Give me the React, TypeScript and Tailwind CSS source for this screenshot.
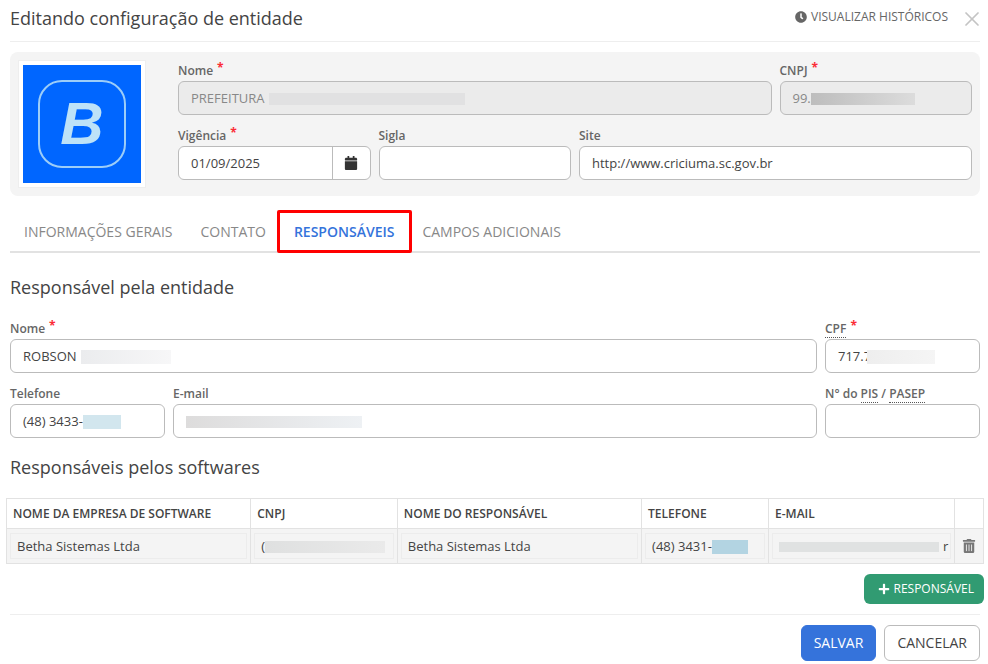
import type { ReactNode } from 'react';
import { FaCalendar, FaClock, FaPlus, FaTrashAlt } from 'react-icons/fa';
import { X } from 'lucide-react';

function Redacted({ className }: { className: string }) {
  return <span className={`block shrink-0 ${className}`} />;
}

function Label({ text, required, hint }: { text: ReactNode; required?: boolean; hint?: boolean }) {
  return (
    <div className="mb-px flex h-5 items-center pt-0.5 text-xs font-semibold text-[#666]">
      <span className={hint ? 'border-b border-dotted border-[#555]' : ''}>{text}</span>
      {required && <span className="mb-1.5 ml-1 text-xs font-bold leading-none text-red-500">*</span>}
    </div>
  );
}

function Box({ children, disabled }: { children?: ReactNode; disabled?: boolean }) {
  return (
    <div
      className={`flex h-8.5 items-center rounded-md border border-[#bbb] px-3 pt-0.5 text-[13px] ${
        disabled ? 'bg-[#ebebeb] text-[#888]' : 'bg-white text-[#444]'
      }`}
    >
      {children}
    </div>
  );
}

function Cell({ children }: { children: ReactNode }) {
  return (
    <td className="border border-[#e2e2e2] bg-[#f4f4f4] px-0.75 py-1">
      <div className="flex h-6.5 items-center overflow-hidden border border-[#ececec] px-1.5 pt-0.5 text-[13px] text-[#444]">
        {children}
      </div>
    </td>
  );
}

function Head({ children }: { children?: ReactNode }) {
  return <th className="h-7.5 border border-[#e2e2e2] px-1.5 text-left text-xs font-semibold text-[#444]">{children}</th>;
}

export default function App() {
  return (
    <div className="h-screen overflow-hidden bg-white pl-2.5 pr-2 font-['Open_Sans',sans-serif] text-[#444]">
      {/* Header */}
      <div className="flex items-center justify-between border-b border-[#eee] pb-2.25 pt-1">
        <h1 className="text-lg font-normal leading-7 text-[#444]">Editando configuração de entidade</h1>
        <div className="flex items-center gap-3">
          <span className="mb-0.5 flex items-center gap-1 text-xs text-[#666]">
            <FaClock className="h-3 w-3" />
            VISUALIZAR HISTÓRICOS
          </span>
          <X className="-mr-1 mt-px h-6 w-6 text-[#c4c4c4]" strokeWidth={1.75} />
        </div>
      </div>

      {/* Entity panel */}
      <div className="mt-2.5 flex gap-8 rounded-lg bg-[#f4f4f4] p-2">
        <div className="h-32 w-32 shrink-0 border border-[#eee] bg-white p-1">
          <div className="flex h-full w-full items-center justify-center bg-[#0066ff]">
            <div className="flex h-22 w-22 items-center justify-center rounded-3xl border-2 border-[#9ccdf8]">
              <span className="font-['Liberation_Sans',sans-serif] text-6xl font-bold italic text-[#bde2f8]">B</span>
            </div>
          </div>
        </div>
        <div className="grid flex-1 grid-cols-4 content-start gap-x-2 gap-y-2.5">
          <div className="col-span-3">
            <Label text="Nome" required />
            <Box disabled>
              PREFEITURA
              <Redacted className="ml-1 h-3 w-49 bg-[#e1e1e2]" />
            </Box>
          </div>
          <div>
            <Label text="CNPJ" required />
            <Box disabled>
              99.
              <Redacted className="h-3 w-26 bg-linear-to-r from-[#bdbdbd] to-[#dcdcdc]" />
            </Box>
          </div>
          <div>
            <Label text="Vigência" required />
            <div className="flex h-8.5 rounded-md border border-[#bbb] bg-white text-[13px]">
              <span className="flex flex-1 items-center px-3 pt-0.5">01/09/2025</span>
              <span className="flex w-9.5 items-center justify-center border-l border-[#bbb]">
                <FaCalendar className="h-3.5 w-3.5 text-[#333]" />
              </span>
            </div>
          </div>
          <div>
            <Label text="Sigla" />
            <Box />
          </div>
          <div className="col-span-2">
            <Label text="Site" />
            <Box>http://www.criciuma.sc.gov.br</Box>
          </div>
        </div>
      </div>

      {/* Tabs */}
      <div className="mt-3.5 flex border-b-2 border-[#e2e2e2] text-sm text-[#888]">
        <span className="px-3.5 pb-2.25 pt-3">INFORMAÇÕES GERAIS</span>
        <span className="px-3.5 pb-2.25 pt-3">CONTATO</span>
        <span className="relative -mb-0.5 border-b-2 border-[#3573db] px-3.5 pb-2.25 pt-3 font-semibold text-[#3573db]">
          RESPONSÁVEIS
          <span className="absolute -bottom-0.5 -left-[3px] -right-1 top-0 rounded-xs border-[3px] border-[#ff0000]" />
        </span>
        <span className="px-3.5 pb-2.25 pt-3">CAMPOS ADICIONAIS</span>
      </div>

      {/* Responsavel */}
      <h2 className="mt-5 text-lg font-normal leading-7">Responsável pela entidade</h2>
      <div className="mt-4 grid grid-cols-6 gap-x-2 gap-y-2.5 pt-px">
        <div className="col-span-5">
          <Label text="Nome" required />
          <Box>
            ROBSON
            <Redacted className="ml-1 h-3.5 w-22.5 bg-linear-to-r from-[#ebecee] to-[#f7f7f8]" />
          </Box>
        </div>
        <div>
          <Label text="CPF" required hint />
          <Box>
            717.7
            <Redacted className="-ml-1 h-3.5 w-17 bg-linear-to-r from-[#eeeeee] to-[#f5f5f5]" />
          </Box>
        </div>
        <div>
          <Label text="Telefone" />
          <Box>
            (48) 3433-
            <Redacted className="h-3.5 w-9.5 bg-[#d2e6ee]" />
          </Box>
        </div>
        <div className="col-span-4">
          <Label text="E-mail" />
          <Box>
            <Redacted className="h-3 w-44 bg-linear-to-r from-[#dddcdc] to-[#eef1f4]" />
          </Box>
        </div>
        <div>
          <Label
            text={
              <>
                N° do <span className="border-b border-dotted border-[#555]">PIS</span> /{' '}
                <span className="border-b border-dotted border-[#555]">PASEP</span>
              </>
            }
          />
          <Box />
        </div>
      </div>

      {/* Softwares */}
      <h2 className="mt-3.75 text-lg font-normal leading-7">Responsáveis pelos softwares</h2>
      <div className="-mx-1 mt-4.25">
        <table className="w-full table-fixed border-collapse">
          <colgroup>
            <col className="w-1/4" />
            <col className="w-[15%]" />
            <col className="w-1/4" />
            <col className="w-[13%]" />
            <col className="w-[19%]" />
            <col className="w-[3%]" />
          </colgroup>
          <thead>
            <tr>
              <Head>NOME DA EMPRESA DE SOFTWARE</Head>
              <Head>CNPJ</Head>
              <Head>NOME DO RESPONSÁVEL</Head>
              <Head>TELEFONE</Head>
              <Head>E-MAIL</Head>
              <Head />
            </tr>
          </thead>
          <tbody>
            <tr>
              <Cell>Betha Sistemas Ltda</Cell>
              <Cell>
                (
                <Redacted className="h-3 w-30 bg-linear-to-r from-[#dfe0e0] to-[#eaeaea]" />
              </Cell>
              <Cell>Betha Sistemas Ltda</Cell>
              <Cell>
                (48) 3431-
                <Redacted className="h-3.5 w-9 bg-[#b3d4e2]" />
              </Cell>
              <Cell>
                <Redacted className="h-2.5 w-40 bg-[#e0e2e2]" />
                <span className="ml-1">r</span>
              </Cell>
              <td className="border border-[#e2e2e2] bg-[#f4f4f4] text-center">
                <FaTrashAlt className="mx-auto h-3.5 w-3.5 text-[#777]" />
              </td>
            </tr>
          </tbody>
        </table>
        <div className="mt-2.5 flex justify-end">
          <button className="flex h-7.5 items-center gap-1 rounded-md bg-[#319b72] pl-3.5 pr-2.5 text-xs font-medium text-white">
            <FaPlus className="h-3 w-3" />
            RESPONSÁVEL
          </button>
        </div>
      </div>

      {/* Footer */}
      <div className="mt-2.5 flex justify-end gap-2 border-t border-[#eee] pt-2.5">
        <button className="h-9 rounded-md border border-[#3573db] bg-[#3573db] px-3 text-sm font-medium text-white">SALVAR</button>
        <button className="h-9 rounded-md border border-[#bbb] bg-white px-3 text-sm text-[#444]">CANCELAR</button>
      </div>
    </div>
  );
}
